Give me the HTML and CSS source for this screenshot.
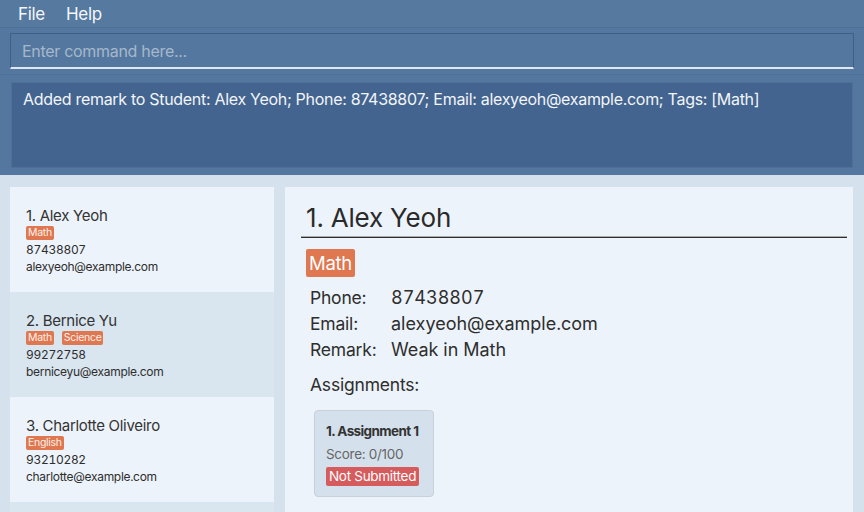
FILE: index.html
```html
<!DOCTYPE html>
<html>
<head>
<meta charset="utf-8">
<link rel="stylesheet" href="styles.css">
</head>
<body>
<div class="app">
  <div class="top">
    <div class="menubar">
      <span class="menu-item">File</span>
      <span class="menu-item">Help</span>
    </div>
    <div class="cmd-wrap">
      <div class="cmd">Enter command here...</div>
    </div>
    <div class="result-wrap">
      <div class="result">Added remark to Student: Alex Yeoh; Phone: 87438807; Email: alexyeoh@example.com; Tags: [Math]</div>
    </div>
  </div>
  <div class="main">
    <div class="list">
      <div class="card">
        <div class="name">1. Alex Yeoh</div>
        <div class="tags"><span class="tag">Math</span></div>
        <div class="line">87438807</div>
        <div class="line">alexyeoh@example.com</div>
      </div>
      <div class="card alt">
        <div class="name">2. Bernice Yu</div>
        <div class="tags"><span class="tag">Math</span><span class="tag">Science</span></div>
        <div class="line">99272758</div>
        <div class="line">berniceyu@example.com</div>
      </div>
      <div class="card">
        <div class="name">3. Charlotte Oliveiro</div>
        <div class="tags"><span class="tag">English</span></div>
        <div class="line">93210282</div>
        <div class="line">charlotte@example.com</div>
      </div>
      <div class="card alt"></div>
    </div>
    <div class="detail">
      <div class="title">1. Alex Yeoh</div>
      <div class="dtags"><span class="dtag">Math</span></div>
      <div class="info">
        <span class="label">Phone:</span><span class="value">87438807</span>
        <span class="label">Email:</span><span class="value">alexyeoh@example.com</span>
        <span class="label">Remark:</span><span class="value">Weak in Math</span>
      </div>
      <div class="section">Assignments:</div>
      <div class="assignments">
        <div class="acard">
          <div class="atitle">1. Assignment 1</div>
          <div class="ascore">Score: 0/100</div>
          <span class="astatus">Not Submitted</span>
        </div>
      </div>
    </div>
  </div>
</div>
</body>
</html>
```
FILE: styles.css
```css
* { box-sizing: border-box; }
html, body { margin: 0; padding: 0; }
body {
  width: 864px;
  height: 512px;
  overflow: hidden;
  font-family: Inter, Roboto, "Liberation Sans", sans-serif;
  background: #d5e1ec;
}
.app { width: 864px; height: 512px; display: flex; flex-direction: column; }
.top {
  background: #53779f;
  height: 175px;
  flex: none;
}
.menubar {
  height: 28px;
  display: flex;
  align-items: center;
  padding-left: 18px;
  gap: 21px;
  border-bottom: 1px solid #4d7099;
  background: #55799f;
}
.menu-item { color: #f4f7fb; font-size: 17px; letter-spacing: -0.3px; }
.cmd-wrap {
  padding: 5px 10px 0 10px;
  height: 47px;
  border-bottom: 1px solid #4d7099;
}
.cmd {
  height: 36px;
  border: 1px solid #3f5f86;
  border-bottom: 2px solid #dfe8f2;
  padding-left: 11px;
  display: flex;
  align-items: center;
  color: #a6b7cb;
  font-size: 16px;
  letter-spacing: -0.3px;
}
.result-wrap { padding: 7px 11px 0 11px; }
.result {
  height: 86px;
  background: #43648f;
  border: 1px solid #4d6f98;
  color: #f2f5fa;
  font-size: 16px;
  letter-spacing: -0.3px;
  padding: 6px 11px;
}
.main {
  flex: 1;
  display: flex;
  padding: 12px 11px 0 10px;
  gap: 11px;
  min-height: 0;
}
.list {
  width: 264px;
  flex: none;
  display: flex;
  flex-direction: column;
  overflow: hidden;
}
.card {
  height: 105px;
  flex: none;
  background: #edf3fa;
  padding: 19px 0 0 16px;
  color: #2b2b2b;
}
.card.alt { background: #d9e5ef; }
.name { font-size: 15px; line-height: 20px; color: #333; letter-spacing: -0.3px; }
.tags { display: flex; gap: 8px; margin-top: 0; height: 14px; }
.tag {
  background: #df7750;
  color: #fbefe9;
  font-size: 10.5px;
  line-height: 14px;
  padding: 0 2px;
  border-radius: 2px;
  letter-spacing: -0.3px;
}
.line { font-size: 12px; line-height: 17px; color: #2e2e2e; letter-spacing: -0.3px; font-variant-numeric: tabular-nums; }
.tags + .line { margin-top: 1px; }
.detail {
  flex: 1;
  background: #edf3fa;
  padding: 14px 6px 0 16px;
  color: #2e2e2e;
}
.title {
  font-size: 26px;
  line-height: 34px;
  padding-left: 5px;
  border-bottom: 1px solid #2e2e2e;
  box-shadow: 0 -1px 0 #ababab inset;
  height: 37px;
  color: #2a2a2a;
  letter-spacing: -0.2px;
}
.dtags { padding: 11px 0 0 5px; display: flex; }
.dtag {
  background: #df7750;
  color: #fff;
  font-size: 18.5px;
  line-height: 28px;
  padding: 0 3px;
  border-radius: 2px;
  letter-spacing: -0.3px;
}
.info {
  display: grid;
  grid-template-columns: 81px auto;
  justify-content: start;
  padding: 8px 0 0 9px;
  font-size: 17.5px;
  line-height: 26px;
  color: #2e2e2e;
  letter-spacing: -0.2px;
}
.value { font-size: 18px; letter-spacing: 0; font-variant-numeric: tabular-nums; }
.section { font-size: 17.5px; line-height: 26px; padding: 9px 0 0 9px; color: #2e2e2e; letter-spacing: -0.2px; }
.assignments { padding: 12px 0 0 13px; display: flex; }
.acard {
  width: 120px;
  height: 87px;
  background: #d4e1ec;
  border: 1px solid #c8d0d9;
  border-radius: 4px;
  padding: 11px 0 0 11px;
}
.atitle { font-size: 13.5px; font-weight: bold; letter-spacing: -0.6px; color: #333; line-height: 18px; }
.ascore { font-size: 13.5px; color: #666; line-height: 18px; margin-top: 5px; letter-spacing: -0.3px; }
.astatus {
  display: inline-block;
  margin-top: 4px;
  background: #d65b5d;
  color: #fff;
  font-size: 13.5px;
  line-height: 19px;
  padding: 0 3px;
  border-radius: 2px;
  letter-spacing: -0.3px;
}
```
